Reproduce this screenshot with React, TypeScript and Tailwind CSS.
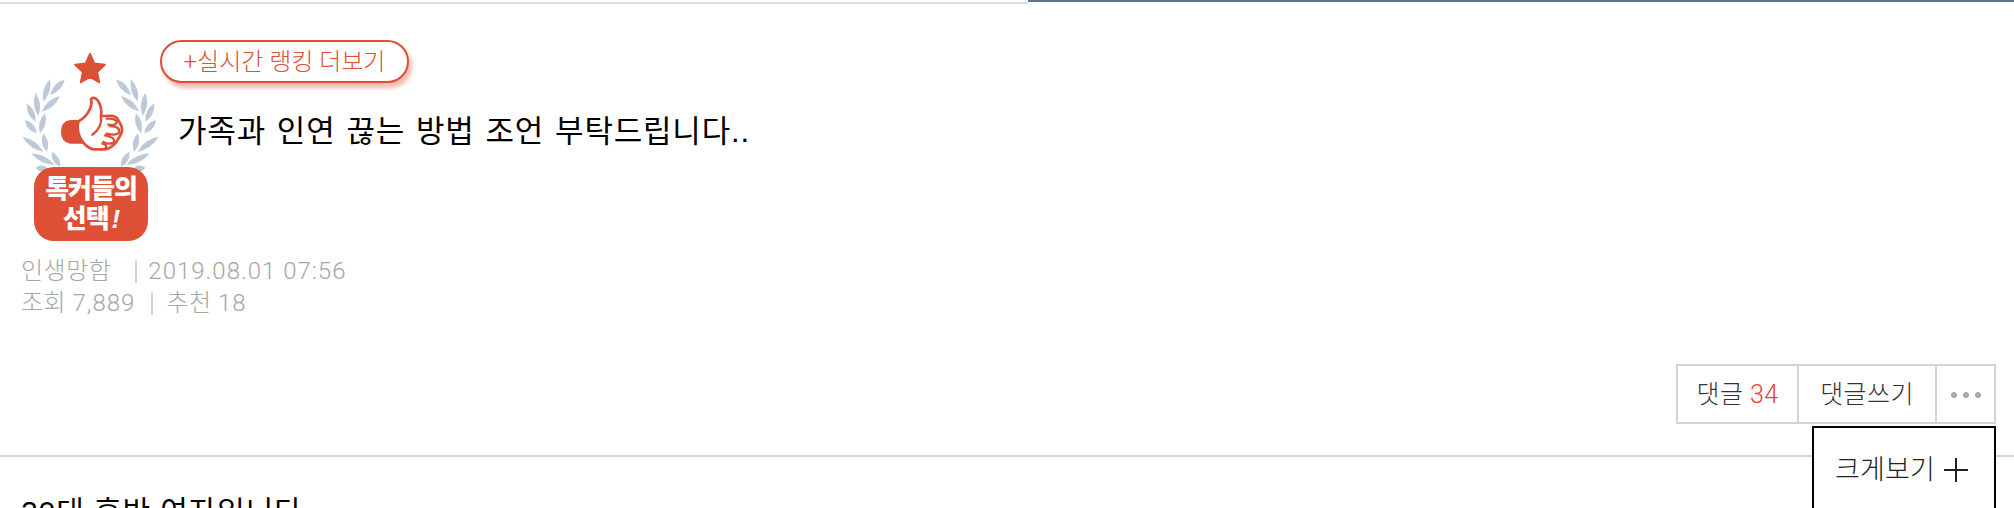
const FONT = "font-['Liberation_Sans','Noto_Sans_CJK_KR',sans-serif]";
const THIN = "font-['Roboto','Noto_Sans_CJK_KR',sans-serif] font-light";

const leaves: [number, number, number, number][] = [
  [85, 95, 105, 28],
  [105, 75, 150, 28],
  [80, 125, 135, 78],
  [70, 138, 62, 68],
  [62, 155, 35, 100],
  [75, 190, 90, 130],
  [65, 190, 30, 150],
  [95, 245, 85, 190],
  [85, 245, 22, 200],
  [135, 290, 110, 245],
  [120, 285, 48, 250],
  [100, 298, 62, 293],
];

const leafPath = ([x1, y1, x2, y2]: [number, number, number, number]) => {
  const mx = (x1 + x2) / 2;
  const my = (y1 + y2) / 2;
  const len = Math.hypot(x2 - x1, y2 - y1);
  const nx = ((y2 - y1) / len) * 18;
  const ny = (-(x2 - x1) / len) * 18;
  return `M${x1} ${y1}Q${mx + nx} ${my + ny} ${x2} ${y2}Q${mx - nx} ${my - ny} ${x1} ${y1}Z`;
};

const Laurel = () => (
  <g transform="translate(-7 18) scale(0.3333)" fill="#bcc9d8">
    {leaves.map((leaf) => (
      <path key={leaf.join("-")} d={leafPath(leaf)} />
    ))}
  </g>
);

const ChoiceBadge = () => (
  <div className="relative h-[189px] w-[136px] shrink-0">
    <svg width="136" height="189" viewBox="0 0 136 189" className="block">
      <Laurel />
      <g transform="translate(137 0) scale(-1 1)">
        <Laurel />
      </g>
      <path
        d="M68 2l4.4 9.6 10.4 1.2-7.7 7.1 2 10.3L68 25l-9.1 5.2 2-10.3-7.7-7.1 10.4-1.2z"
        fill="#dd5035"
        stroke="#dd5035"
        strokeWidth="2"
        strokeLinejoin="round"
      />
      <g transform="translate(33 40) scale(0.3333)">
        <path d="M72 84H45Q18 88 18 120Q18 150 45 155H88Q62 125 72 84Z" fill="#dd5035" />
        <path
          d="M70 88Q95 75 105 50Q112 35 108 22Q115 12 128 25Q142 45 138 72L155 72Q185 68 190 85Q205 105 200 122Q192 140 180 155Q165 170 150 172H115Q98 168 85 152Q62 125 70 88Z"
          fill="#fff"
          stroke="#dd5035"
          strokeWidth="8"
          strokeLinejoin="round"
        />
        <path
          d="M138 72Q142 108 112 128M155 80Q185 78 185 92Q180 102 160 98M165 102Q198 104 192 122Q185 132 155 125M150 130Q180 135 178 150Q165 160 145 150M142 155Q160 158 150 170"
          fill="none"
          stroke="#dd5035"
          strokeWidth="7"
          strokeLinecap="round"
        />
      </g>
    </svg>
    <div className="absolute left-[12px] top-[115px] flex h-[74px] w-[114px] flex-col items-center justify-center rounded-[20px] bg-[#dd5035] text-[26px] leading-[30px] font-black tracking-[-1px] text-white">
      <span>톡커들의</span>
      <span>
        선택<i className="ml-[3px]">!</i>
      </span>
    </div>
  </div>
);

const App = () => (
  <div className={`relative h-[508px] overflow-hidden bg-white ${FONT}`}>
    <div className="flex h-[4px]">
      <div className="mt-[2px] h-[2px] w-[1028px] bg-[#dcdce4]" />
      <div className="h-[2px] flex-1 bg-[#5f7390]" />
    </div>

    <div className="flex h-[251px] pt-[36px] pl-[22px]">
      <div className="pt-[12px]">
        <ChoiceBadge />
      </div>
      <div className="ml-[2px] flex flex-col items-start">
        <button className={`flex h-[43px] w-[249px] items-center justify-center rounded-full border-2 border-[#dd5035] bg-white text-[24px] text-[#dd5035] shadow-[3px_5px_4px_rgba(221,80,53,0.4)] ${THIN}`}>
          +실시간 랭킹 더보기
        </button>
        <h1 className="mt-[29px] ml-[18px] text-[31px] leading-[40px] font-normal tracking-[0.8px] [word-spacing:1.5px] whitespace-nowrap text-black">
          가족과 인연 끊는 방법 조언 부탁드립니다..
        </h1>
      </div>
    </div>

    <div className={`pl-[21px] text-[24px] leading-[32px] tracking-[0.5px] text-[#a6a6a6] ${THIN}`}>
      <div className="flex items-center">
        <span>인생망함</span>
        <span className="mr-[11px] ml-[24px] h-[23px] w-[2px] bg-[#d4d4d4]" />
        <span className="tracking-[1px]">2019.08.01 07:56</span>
      </div>
      <div className="flex items-center">
        <span>
          조회 <span className="tracking-[1px]">7,889</span>
        </span>
        <span className="mr-[13px] ml-[16px] h-[23px] w-[2px] bg-[#d4d4d4]" />
        <span>
          추천 <span className="tracking-[1px]">18</span>
        </span>
      </div>
    </div>

    <div className="mt-[45px] flex justify-end pr-[18px]">
      <div className={`flex h-[60px] border-2 border-[#d4d4d4] text-[25px] tracking-[0.4px] text-[#333333] ${THIN}`}>
        <div className="flex w-[121px] items-center justify-center border-r-2 border-[#d4d4d4] pt-[2px]">
          <span>
            댓글 <span className="text-[#e8412f]">34</span>
          </span>
        </div>
        <div className="flex w-[138px] items-center justify-center border-r-2 border-[#d4d4d4] pt-[2px]">댓글쓰기</div>
        <div className="flex w-[57px] items-center justify-center gap-[6px] pt-[2px]">
          <span className="size-[6px] rounded-full bg-[#aaaaaa]" />
          <span className="size-[6px] rounded-full bg-[#aaaaaa]" />
          <span className="size-[6px] rounded-full bg-[#aaaaaa]" />
        </div>
      </div>
    </div>

    <div className="mt-[31px] h-[2px] bg-[#d4d4d4]" />

    <p className="mt-[35px] pl-[21px] text-[30px] leading-[40px] tracking-[0.9px] whitespace-nowrap text-black">20대 후반 여자입니다</p>

    <div className={`absolute top-[426px] right-[18px] flex h-[100px] w-[184px] items-start gap-[8px] border-2 border-black bg-white pt-[22px] pl-[21px] text-[27px] leading-[40px] tracking-[0.2px] text-[#222222] ${THIN}`}>
      <span>크게보기</span>
      <svg width="26" height="40" viewBox="0 0 26 40" className="block">
        <path d="M13 8v24M1 20h24" stroke="#222222" strokeWidth="2" fill="none" />
      </svg>
    </div>
  </div>
);

export default App;
